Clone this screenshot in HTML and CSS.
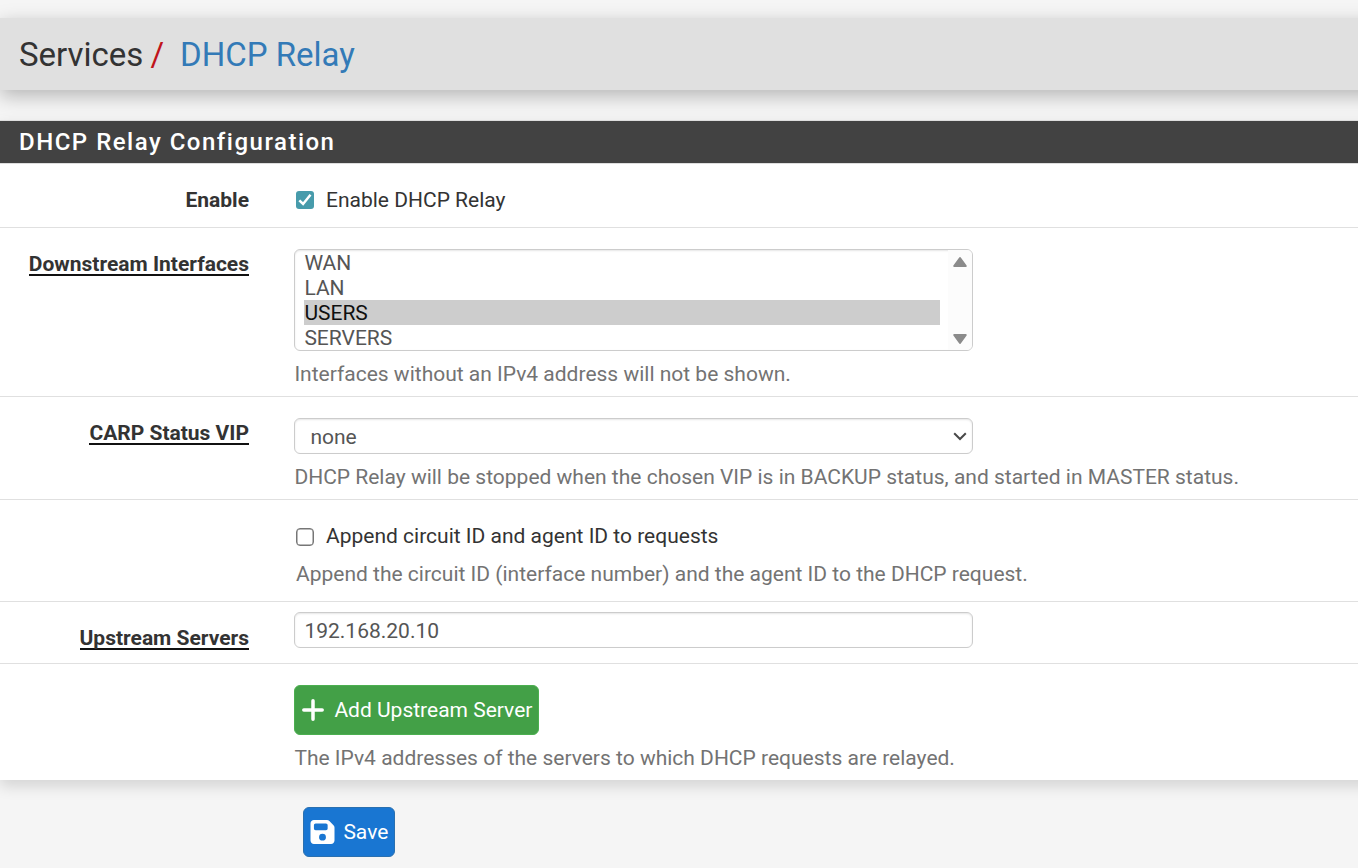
FILE: index.html
```html
<!DOCTYPE html>
<html lang="en">
<head>
<meta charset="utf-8">
<title>Services / DHCP Relay</title>
<link rel="stylesheet" href="styles.css">
</head>
<body>
<header class="page-header">
  <span class="crumb">Services</span><span class="slash">/</span><a class="crumb-link">DHCP Relay</a>
</header>
<main>
  <section class="panel">
    <h2 class="panel-title"><span class="title-text">DHCP Relay Configuration</span></h2>
    <div class="row row-enable">
      <div class="label"><span class="plain">Enable</span></div>
      <div class="field">
        <label class="check"><span class="box checked"><svg viewBox="0 0 18 18"><path d="M3.3 9.3L7.1 13L14.5 3.8" fill="none" stroke="#fff" stroke-width="2.5"/></svg></span><span class="check-text">Enable DHCP Relay</span></label>
      </div>
    </div>
    <div class="row row-interfaces">
      <div class="label"><span class="required">Downstream Interfaces</span></div>
      <div class="field">
        <div class="listbox">
          <div class="options">
            <div class="option">WAN</div>
            <div class="option">LAN</div>
            <div class="option selected">USERS</div>
            <div class="option">SERVERS</div>
          </div>
          <div class="scrollbar">
            <svg class="arrow" viewBox="0 0 16 12"><path d="M8 2L13.8 10H2.2Z" fill="#8b8b8b" stroke="#8b8b8b" stroke-width="2" stroke-linejoin="round"/></svg>
            <svg class="arrow" viewBox="0 0 16 12"><path d="M8 10L13.8 2H2.2Z" fill="#8b8b8b" stroke="#8b8b8b" stroke-width="2" stroke-linejoin="round"/></svg>
          </div>
        </div>
        <p class="help">Interfaces without an IPv4 address will not be shown.</p>
      </div>
    </div>
    <div class="row row-carp">
      <div class="label"><span class="required">CARP Status VIP</span></div>
      <div class="field">
        <div class="control select"><span>none</span><svg class="chevron" viewBox="0 0 14 9"><path d="M1.2 1.3L7 7L12.8 1.3" fill="none" stroke="#494949" stroke-width="2"/></svg></div>
        <p class="help">DHCP Relay will be stopped when the chosen VIP is in BACKUP status, and started in MASTER status.</p>
      </div>
    </div>
    <div class="row row-append">
      <div class="label"></div>
      <div class="field">
        <label class="check"><span class="box"></span><span class="check-text">Append circuit ID and agent ID to requests</span></label>
        <p class="help">Append the circuit ID (interface number) and the agent ID to the DHCP request.</p>
      </div>
    </div>
    <div class="row row-servers">
      <div class="label"><span class="required">Upstream Servers</span></div>
      <div class="field"><div class="control"><span>192.168.20.10</span></div></div>
    </div>
    <div class="row row-add">
      <div class="label"></div>
      <div class="field">
        <button class="btn btn-add"><svg class="plus" viewBox="0 0 22 22"><path d="M11 1.8V20.2M1.8 11H20.2" stroke="#fff" stroke-width="3.5" stroke-linecap="round"/></svg><span>Add Upstream Server</span></button>
        <p class="help">The IPv4 addresses of the servers to which DHCP requests are relayed.</p>
      </div>
    </div>
  </section>
  <div class="actions">
    <button class="btn btn-save"><svg class="disk" viewBox="0 0 448 448"><path fill="#fff" fill-rule="evenodd" d="M64 0C29 0 0 29 0 64V384C0 419 29 448 64 448H384C419 448 448 419 448 384V141C448 124 441 108 429 96L352 19C340 7 324 0 307 0ZM64 96C64 78 78 64 96 64H288C306 64 320 78 320 96V160C320 178 306 192 288 192H96C78 192 64 178 64 160ZM224 256A64 64 0 1 1 224 384A64 64 0 1 1 224 256Z"/></svg><span>Save</span></button>
  </div>
</main>
</body>
</html>
```
FILE: styles.css
```css
* { box-sizing: border-box; }
body {
  margin: 0;
  padding-top: 18px;
  height: 868px;
  overflow: hidden;
  background: #f5f5f5;
  color: #333;
  font-family: Roboto, sans-serif;
  font-size: 21px;
  line-height: 28px;
}
.page-header {
  display: flex;
  align-items: center;
  height: 72px;
  margin-right: -24px;
  padding: 2px 19px 0;
  background: #e0e0e0;
  box-shadow: 0 6px 18px rgba(0, 0, 0, .26);
  font-size: 33px;
  line-height: 40px;
}
.slash { margin: 0 16px 0 7px; color: #c0141b; }
.crumb-link { color: #337ab7; }
.panel {
  margin-top: 30px;
  margin-right: -24px;
  height: 660px;
  background: #fff;
  box-shadow: 0 6px 14px rgba(0, 0, 0, .14);
}
.panel-title {
  display: flex;
  align-items: center;
  height: 44px;
  margin: 0;
  padding: 0 19px;
  background: #424242;
  border-top: 1px solid #ddd;
  border-bottom: 1px solid #ddd;
  color: #fff;
  font-size: 24px;
  font-weight: 500;
  letter-spacing: 1.5px;
}
.row { display: flex; border-bottom: 1px solid #e0e0e0; }
.row-enable { height: 64px; padding-top: 22px; }
.row-interfaces { height: 169px; padding-top: 21px; }
.row-carp { height: 103px; padding-top: 21px; }
.row-append { height: 102px; padding-top: 22px; }
.row-servers { height: 62px; padding-top: 10px; }
.row-add { height: 116px; padding-top: 21px; border-bottom: 0; }
.label { width: 249px; flex: none; text-align: right; font-weight: 700; }
.row-interfaces .label, .row-carp .label { padding-top: 1px; }
.row-servers .label { padding-top: 12px; }
.required { display: inline-block; height: 26px; border-bottom: 2px solid #111; }
.field { margin-left: 45px; }
.check { display: flex; align-items: center; padding-left: 2px; }
.box {
  display: block;
  width: 18px;
  height: 18px;
  margin-right: 12px;
  border: 1px solid #767676;
  border-radius: 4px;
  box-shadow: inset 0 0 0 .5px #767676;
}
.row-append .box { margin-top: 1px; }
.checked { border: 0; border-radius: 3px; background: #479bab; box-shadow: none; }
.checked svg { display: block; width: 18px; height: 18px; }
.help { margin: 0; padding-left: .4px; color: #737373; white-space: nowrap; }
.row-append .help { padding: 10px 0 0 2px; }
.listbox {
  display: flex;
  justify-content: space-between;
  width: 679px;
  height: 102px;
  margin-bottom: 9px;
  padding-left: 9px;
  border: 1px solid #ccc;
  border-radius: 6px;
  overflow: hidden;
  box-shadow: inset 0 1px 2px rgba(0, 0, 0, .1);
  color: #555;
  line-height: 26px;
}
.options { width: 636px; }
.option { height: 25px; padding-left: .4px; }
.selected { background: #cdcdcd; color: #101010; }
.scrollbar {
  display: flex;
  flex-direction: column;
  justify-content: space-between;
  align-items: center;
  width: 24px;
  padding: 6px 0 5px;
  background: #fcfcfc;
}
.arrow { display: block; width: 16px; height: 12px; }
.control {
  display: flex;
  align-items: center;
  justify-content: space-between;
  width: 679px;
  height: 36px;
  padding: 0 9.4px;
  border: 1px solid #ccc;
  border-radius: 6px;
  background: #fff;
  box-shadow: inset 0 1px 2px rgba(0, 0, 0, .1);
  color: #555;
}
.control span { padding-top: 1px; }
.select { margin-bottom: 9px; padding: 0 5px 0 15.4px; }
.chevron { width: 14px; height: 9px; }
.btn {
  display: flex;
  align-items: center;
  height: 50px;
  margin: 0;
  border-radius: 6px;
  color: #fff;
  font: inherit;
  white-space: nowrap;
}
.btn-add { width: 245px; margin-bottom: 9px; padding: 0 0 0 7px; border: 1px solid #4caf50; background: #43a047; }
.plus { flex: none; width: 22px; height: 22px; margin-right: 10.4px; }
.actions { padding: 27px 0 0 303px; }
.btn-save { width: 92px; padding: 0 0 0 6px; border: 1px solid #2a70b0; background: #1976d2; }
.disk { flex: none; width: 25px; height: 24px; margin-right: 8.4px; }
```
